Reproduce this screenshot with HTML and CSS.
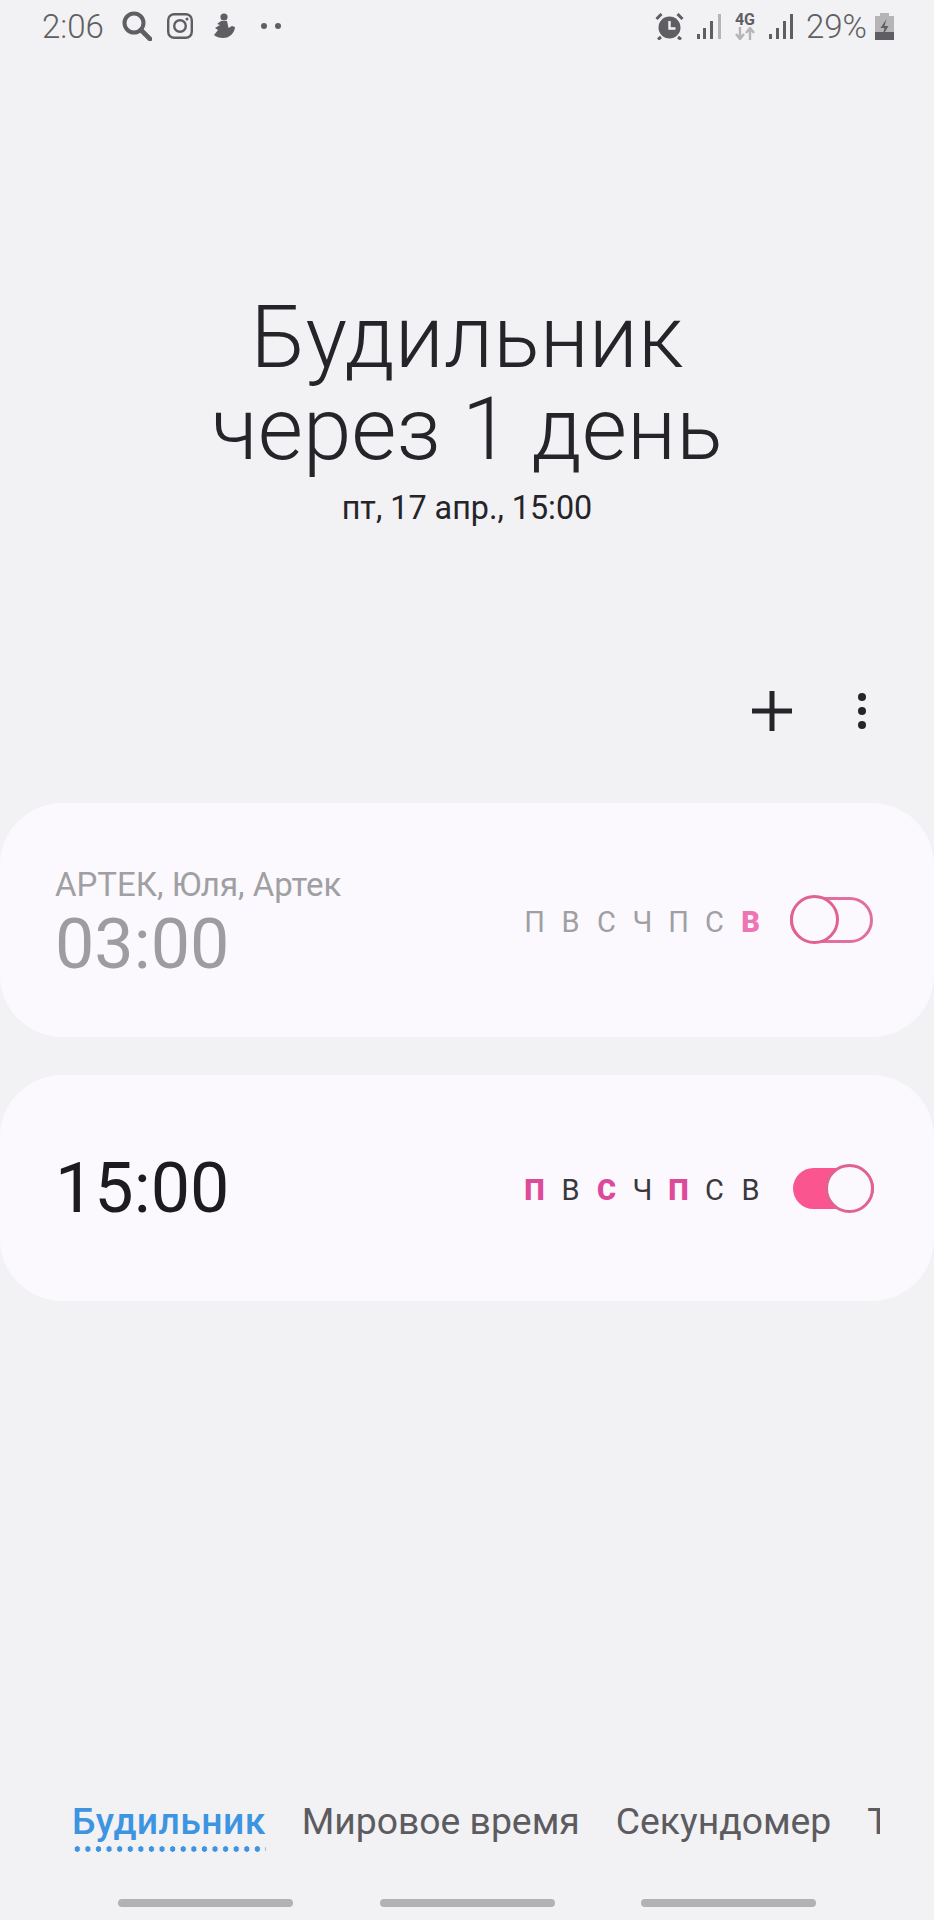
FILE: index.html
```html
<!DOCTYPE html>
<html lang="ru">
<head>
  <meta charset="UTF-8">
  <meta name="viewport" content="width=device-width, initial-scale=1.0">
  <title>Будильник</title>
  <link rel="stylesheet" href="styles.css">
</head>
<body>
  <div class="status-bar">
    <div class="status-left">
      <span class="status-time">2:06</span>
      <svg class="icon-search" width="30" height="30" viewBox="0 0 30 30"><circle cx="12" cy="12" r="9.5" fill="none" stroke="#5f5f63" stroke-width="4"/><path d="M19 19l9 9" stroke="#5f5f63" stroke-width="4.6" stroke-linecap="round"/></svg>
      <svg class="icon-insta" width="26" height="26" viewBox="0 0 26 26"><rect x="1.2" y="1.2" width="23.6" height="23.6" rx="6" fill="none" stroke="#5f5f63" stroke-width="2.4"/><circle cx="13" cy="13" r="5.8" fill="none" stroke="#5f5f63" stroke-width="2.4"/><circle cx="20" cy="6" r="1.5" fill="#5f5f63"/></svg>
      <svg width="23" height="26" viewBox="0 0 23 26"><circle cx="12" cy="4" r="3.6" fill="#5f5f63"/><path d="M9 8h6l1.500 7 3.500-2 3 1c-.5 6-5 11-12 11-3.500 0-7-1-9-3l4-5-3-2 5-3-3-1 4-3z" fill="#5f5f63"/></svg>
      <span class="dots"><i></i><i></i></span>
    </div>
    <div class="status-right">
      <svg width="29" height="27" viewBox="0 0 29 27"><circle cx="14.500" cy="14.500" r="11" fill="#5f5f63"/><path d="M14.500 8v7.500h6" fill="none" stroke="#f2f1f4" stroke-width="2.400"/><path d="M1.500 6l5-5M27.500 6l-5-5M6 24l-3 2.500M23 24l3 2.500" stroke="#5f5f63" stroke-width="3"/></svg>
      <svg width="24" height="25" viewBox="0 0 24 25"><rect x="0" y="20" width="3" height="5" fill="#5f5f63"/><rect x="6" y="14" width="3" height="11" fill="#5f5f63"/><rect x="13" y="7" width="3" height="18" fill="#5f5f63"/><rect x="21" y="0" width="3" height="25" fill="#b5b5b8"/></svg>
      <span class="net"><b>4G</b><svg width="20" height="13" viewBox="0 0 20 13"><path d="M5 0v11M1 7l4 5 4-5" fill="none" stroke="#b5b5b8" stroke-width="2.400"/><path d="M15 13V2M11 6l4-5 4 5" fill="none" stroke="#b5b5b8" stroke-width="2.400"/></svg></span>
      <svg width="24" height="25" viewBox="0 0 24 25"><rect x="0" y="20" width="3" height="5" fill="#5f5f63"/><rect x="7" y="14" width="3" height="11" fill="#5f5f63"/><rect x="14" y="7" width="3" height="18" fill="#5f5f63"/><rect x="21" y="0" width="3" height="25" fill="#5f5f63"/></svg>
      <span class="status-pct">29%</span>
      <svg class="icon-battery" width="19" height="27" viewBox="0 0 19 27"><path d="M5 0h9v3h5v24H0V3h5z" fill="#b5b5b8"/><rect x="0" y="19" width="19" height="8" fill="#5f5f63"/><path d="M11.500 6L5.500 15h4l-2 8 6-10h-4z" fill="#5f5f63"/></svg>
    </div>
  </div>

  <header class="hero">
    <h1>Будильник<br>через 1 день</h1>
    <p>пт, 17 апр., 15:00</p>
  </header>

  <div class="actions">
    <svg width="40" height="40" viewBox="0 0 40 40"><path d="M20 0v40M0 20h40" stroke="#252429" stroke-width="5"/></svg>
    <span class="more"><i></i><i></i><i></i></span>
  </div>

  <main class="alarms">
    <section class="alarm alarm-off">
      <div class="alarm-info">
        <div class="alarm-name">АРТЕК, Юля, Артек</div>
        <div class="alarm-time">03:00</div>
      </div>
      <div class="days">
        <span>П</span><span>В</span><span>С</span><span>Ч</span><span>П</span><span>С</span><span class="on">В</span>
      </div>
      <div class="switch"><span class="knob"></span></div>
    </section>

    <section class="alarm alarm-on">
      <div class="alarm-info">
        <div class="alarm-time">15:00</div>
      </div>
      <div class="days">
        <span class="on">П</span><span>В</span><span class="on">С</span><span>Ч</span><span class="on">П</span><span>С</span><span>В</span>
      </div>
      <div class="switch"><span class="knob"></span></div>
    </section>
  </main>

  <nav class="tabs">
    <div class="tabs-inner">
      <span class="tab active">Будильник</span>
      <span class="tab">Мировое время</span>
      <span class="tab">Секундомер</span>
      <span class="tab">Таймер</span>
    </div>
  </nav>

  <div class="nav-bar"><i></i><i></i><i></i></div>
</body>
</html>
```

FILE: styles.css
```css
* {
  box-sizing: border-box;
}

html, body {
  margin: 0;
  padding: 0;
}

body {
  width: 934px;
  height: 1920px;
  overflow: hidden;
  display: flex;
  flex-direction: column;
  background-color: #f2f1f4;
  color: #252429;
  font-family: Roboto, sans-serif;
}

/* status bar */
.status-bar {
  height: 56px;
  padding: 0 40px 4px 42px;
  display: flex;
  justify-content: space-between;
  align-items: center;
  color: #5f5f63;
}

.status-left, .status-right {
  display: flex;
  align-items: center;
}

.status-time {
  width: 62px;
  font-size: 33px;
  font-weight: 300;
  margin-right: 18px;
}

.icon-search {
  margin-right: 15px;
}

.icon-insta {
  margin-right: 19px;
}

.dots {
  display: flex;
  gap: 8px;
  margin-left: 26px;
}

.dots i {
  width: 6px;
  height: 6px;
  border-radius: 50%;
  background-color: #5f5f63;
}

.status-right {
  gap: 13px;
}

.net {
  width: 22px;
  display: flex;
  flex-direction: column;
  align-items: center;
  line-height: 14px;
}

.net b {
  font-size: 16px;
}

.status-pct {
  font-size: 33px;
  font-weight: 300;
}

.icon-battery {
  margin-left: -5px;
}

/* heading */
.hero {
  margin-top: 235px;
  text-align: center;
}

.hero h1 {
  margin: 0;
  font-size: 87.3px;
  font-weight: 300;
  line-height: 92px;
}

.hero p {
  margin: 13px 0 0;
  font-size: 32.3px;
  line-height: 40px;
}

.actions {
  margin-top: 162px;
  padding-right: 68px;
  height: 42px;
  display: flex;
  justify-content: flex-end;
  align-items: center;
  gap: 66px;
}

.more {
  display: flex;
  flex-direction: column;
  gap: 6px;
}

.more i {
  width: 8px;
  height: 8px;
  border-radius: 50%;
  background-color: #252429;
}

/* alarm cards */
.alarms {
  margin-top: 71px;
  display: flex;
  flex-direction: column;
  gap: 38px;
}

.alarm {
  height: 226px;
  padding: 0 60px 0 55px;
  display: flex;
  align-items: center;
  background-color: #fbf9fd;
  border-radius: 62px;
}

.alarm-off {
  height: 234px;
  padding-right: 61px;
}

.alarm-off .alarm-info {
  padding-top: 10px;
}

.alarm-info {
  flex: 1;
}

.alarm-name {
  font-size: 33px;
  line-height: 38px;
  color: #a09fa3;
}

.alarm-time {
  font-size: 70px;
  line-height: 80px;
  color: #1c1b20;
}

.alarm-off .alarm-time {
  color: #9d9c9f;
}

.days {
  display: flex;
  gap: 15px;
  margin: 3px 32px 0 0;
  font-size: 29px;
  color: #39383c;
}

.days span {
  width: 21px;
  text-align: center;
}

.days .on {
  font-weight: 900;
  color: #dd4a9a;
}

.alarm-off .days {
  margin-right: 29px;
  color: #a09fa3;
}

.alarm-off .days .on {
  color: #ee75b4;
}

.switch {
  position: relative;
  width: 81px;
  height: 41px;
  border-radius: 21px;
}

.alarm-off .switch {
  width: 83px;
  height: 46px;
  border-radius: 23px;
  border: 3px solid #e2709f;
}

.alarm-on .switch {
  background-color: #fb5590;
}

.knob {
  position: absolute;
  width: 49px;
  height: 49px;
  border-radius: 50%;
  background-color: #fbf9fd;
  border: 3px solid #e0628f;
}

.alarm-off .knob {
  left: -3px;
  top: -5px;
}

.alarm-on .knob {
  right: 0;
  top: -4px;
}

/* bottom tabs */
.tabs {
  margin-top: auto;
  padding-left: 72px;
  height: 62px;
}

.tabs-inner {
  width: 808px;
  overflow: hidden;
  display: flex;
  gap: 36px;
  white-space: nowrap;
}

.tab {
  font-size: 37.3px;
  line-height: 50px;
  color: #5c5b60;
}

.tab.active {
  height: 56px;
  color: #3d94e0;
  font-weight: 500;
  letter-spacing: 0.4px;
  background-image: radial-gradient(circle, #3d94e0 2.5px, transparent 3px);
  background-size: 10.6px 6px;
  background-repeat: repeat-x;
  background-position: left bottom;
}

.nav-bar {
  margin-top: 41px;
  height: 21px;
  padding: 0 118px 0 118px;
  display: flex;
  justify-content: space-between;
}

.nav-bar i {
  width: 175px;
  height: 8px;
  border-radius: 4px;
  background-color: #b2b1b4;
}
```
